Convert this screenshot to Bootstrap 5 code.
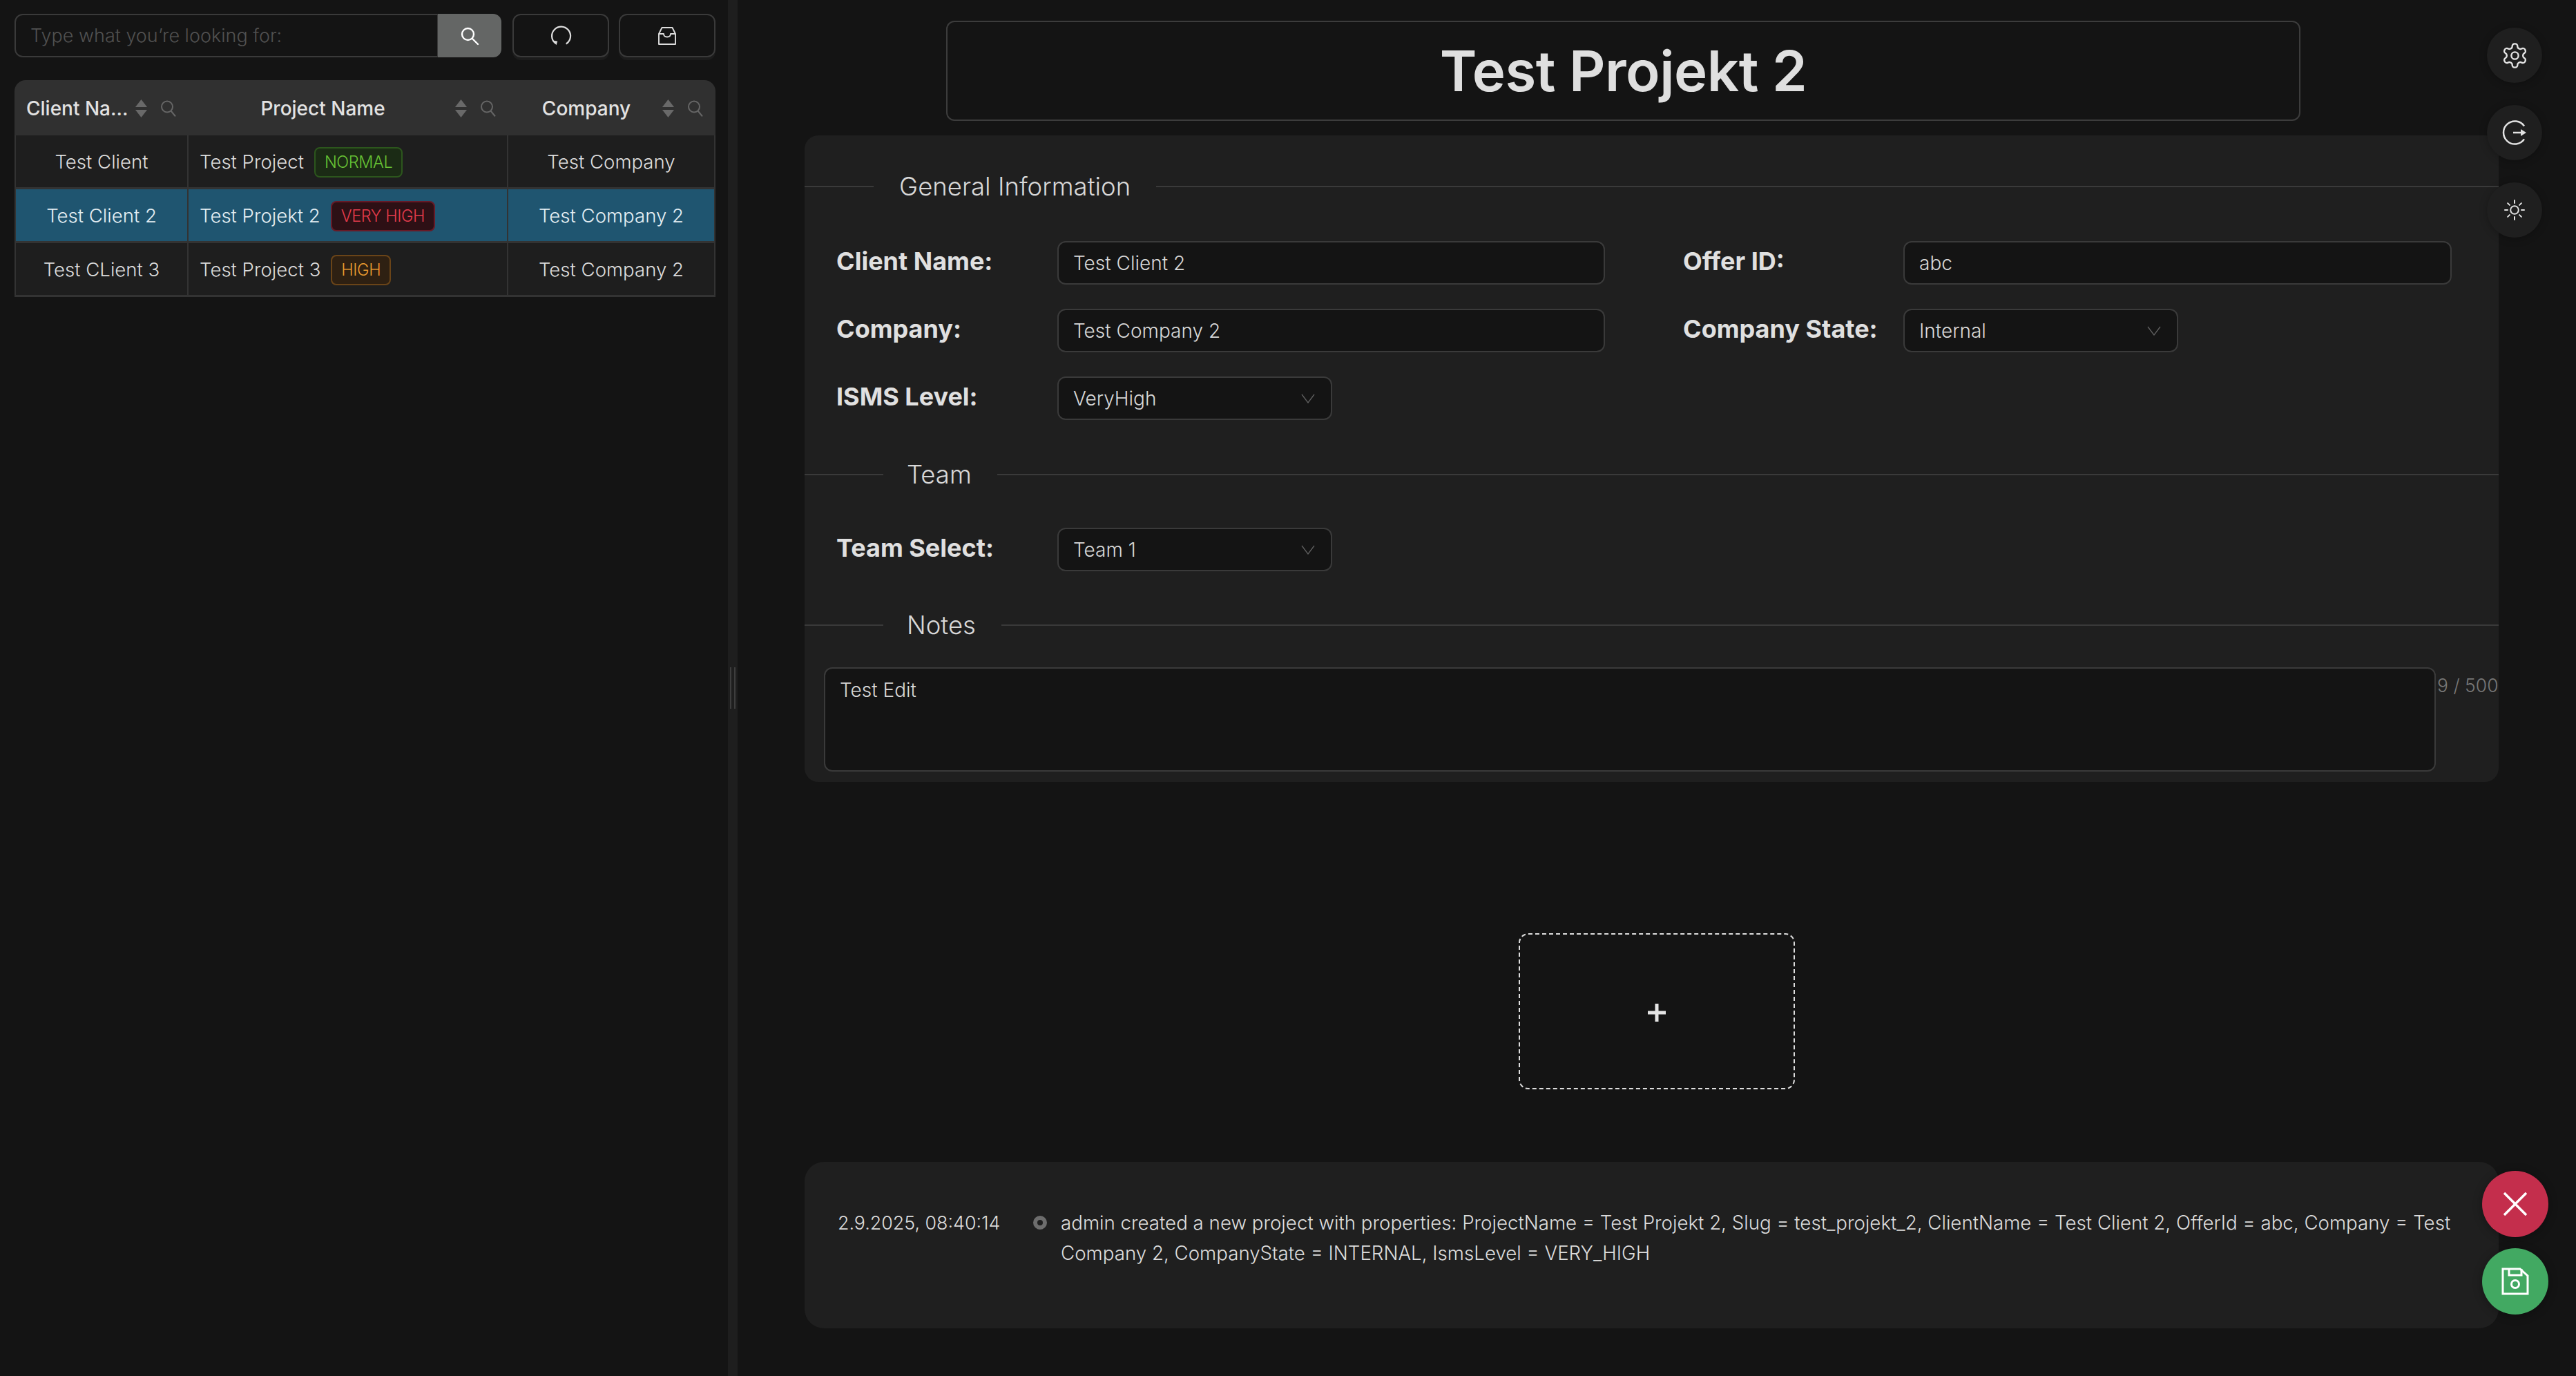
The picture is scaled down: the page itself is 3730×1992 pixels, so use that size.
<!DOCTYPE html>
<html lang="en">
<head>
  <meta charset="UTF-8" />
  <meta name="viewport" content="width=device-width, initial-scale=1" />
  <title>Test Projekt 2</title>
  <link href="https://cdn.jsdelivr.net/npm/bootstrap@5.3.0/dist/css/bootstrap.min.css" rel="stylesheet" />
  <style>
    html, body { height: 100%; }
    body {
      background-color: #141414;
      color: #dcdcdc;
      font-family: "Inter", "Liberation Sans", sans-serif;
      font-size: 27px;
      font-weight: 300;
      overflow: hidden;
    }
    svg { display: block; fill: none; stroke: currentColor; }

    /* left side */
    .side-pane { width: 1054px; padding: 20px 18px 0 21px; flex: none; }
    .top-tools { height: 63px; margin-bottom: 33px; }
    .search-group { width: 705px; margin-right: 16px; }
    .search-group .form-control {
      background: #141414; border: 2px solid #3a3a3a; color: #ddd; font-size: 27px; font-weight: 300;
      padding: 0 21px; border-radius: 12px 0 0 12px; height: 63px;
    }
    .search-group .form-control::placeholder { color: #505050; }
    .search-btn {
      width: 92px; height: 63px; background: #646665; border: 0; color: #fff;
      border-radius: 0 12px 12px 0 !important;
      display: flex; align-items: center; justify-content: center; padding: 0;
    }
    .tool-btn {
      width: 140px; height: 63px; background: #141414; border: 2px solid #3a3a3a; border-radius: 12px; color: #ddd;
      box-shadow: 0 4px 0 #1c1c1c; display: flex; align-items: center; justify-content: center; padding: 0;
    }
    .tool-btn + .tool-btn { margin-left: 14px; }
    .tool-btn:hover, .search-btn:hover { color: #fff; }

    .project-table {
      --bs-table-bg: #1e1e1e; --bs-table-color: #dcdcdc; --bs-table-border-color: #333;
      width: 1015px; table-layout: fixed; margin: 0; border-collapse: separate; border-spacing: 0;
      font-size: 27.600px;
    }
    .project-table .c-client { width: 252px; }
    .project-table .c-project { width: 463px; }
    .project-table .c-company { width: 300px; }
    .project-table th {
      background: #303030; color: #e2e2e2; height: 80px; padding: 1px 18px 0 17px; font-weight: 500; font-size: 28px; border: 0;
      box-shadow: none; vertical-align: middle;
    }
    .project-table th:first-child { border-top-left-radius: 16px; }
    .project-table th:last-child { border-top-right-radius: 16px; }
    .project-table td {
      height: 78px; padding: 2px 17px 0; vertical-align: middle; text-align: center;
      border: 0; border-right: 2px solid #333; border-bottom: 3px solid #333; white-space: nowrap;
    }
    .project-table td:first-child { border-left: 2px solid #333; }
    .project-table td.name-cell { text-align: left; padding-left: 16px; }
    .project-table tr.row-active td { --bs-table-bg: #1f5570; background: #1f5570; color: #e4eef3; }
    .head-text { flex: 1 1 0; min-width: 0; text-align: center; white-space: nowrap; }
    .sort-mark { width: 17px; height: 26px; margin: 0 20px 0 14px; flex: none; color: #696969; }
    .sort-mark path { fill: currentColor; stroke: none; }
    .filter-mark { width: 22px; height: 24px; flex: none; color: #666; stroke-width: 2; }
    .level-tag {
      display: inline-block; height: 44px; line-height: 40px; padding: 0 13px; margin-left: 15px; border-radius: 8px;
      font-size: 23.500px; font-weight: 300; border: 2px solid; letter-spacing: -.4px;
    }
    .level-normal { background: #1b2b15; border-color: #2c561d; color: #67c234; }
    .level-veryhigh { background: #2d1015; border-color: #671a27; color: #e23b4b; }
    .level-high { background: #2e2012; border-color: #6a4418; color: #e89a30; }

    .splitter { width: 14px; flex: none; background: #1e1e1e; display: flex; align-items: center; justify-content: center; gap: 4px; }
    .splitter i { display: block; width: 2px; height: 60px; background: #3d3d3d; }

    /* right side */
    .main-pane { flex: 1 1 0; min-width: 0; padding: 30px 112px 0 97px; position: relative; }
    .title-box {
      width: 1961px; height: 145px; margin: 0 0 21px 205px; border: 2px solid #3c3c3c; border-radius: 12px;
      display: flex; align-items: center; justify-content: center;
    }
    .title-box h1 { font-size: 81.500px; font-weight: 600; color: #dfdfdf; margin: 0; letter-spacing: -.5px; }
    .info-panel { background: #1f1f1f; border-radius: 20px; height: 936px; padding-top: 55px; }
    .line-title { display: flex; align-items: center; height: 38px; font-size: 36.500px; color: #d8d8d8; }
    .line-title::before, .line-title::after { content: ""; height: 2px; background: #3a3a3a; display: block; }
    .line-title::after { flex: 1 1 0; }
    .line-title span { margin: 0 37px; white-space: nowrap; }
    .line-general::before { width: 100px; }
    .line-team::before, .line-notes::before { width: 114px; }
    .line-team span, .line-notes span { margin-left: 34px; }
    .line-team { margin-top: 60px; }
    .field-grid {
      display: grid; grid-template-columns: 320px 793px 113px 319px 794px; row-gap: 35px;
      padding-left: 46px; align-items: center;
    }
    .fields-general { margin-top: 60px; }
    .field-grid label { font-size: 36px; font-weight: 700; color: #e0e0e0; margin: 0; white-space: nowrap; padding-bottom: 6px; }
    .field-grid .grid-gap { display: block; }
    .info-panel .form-control, .info-panel .form-select {
      background-color: #141414; border: 2px solid #3a3a3a; border-radius: 12px; color: #d8d8d8;
      font-size: 28px; font-weight: 300; height: 63px; padding: 0 21px;
    }
    .info-panel .form-select {
      width: 398px; padding-right: 50px;
      background-image: url("data:image/svg+xml,%3csvg xmlns='http://www.w3.org/2000/svg' viewBox='0 0 20 14'%3e%3cpath fill='none' stroke='%23606060' stroke-width='1.3' d='M1 1l9 12 9-12'/%3e%3c/svg%3e");
      background-position: right 23px center; background-size: 20px 14px;
    }
    .team-wrap { margin: 58px 0 59px; }
    .notes-wrap { display: flex; margin: 42px 0 0 28px; align-items: flex-start; }
    .info-panel textarea.form-control { width: 2334px; height: 151px; padding: 10px 21px; resize: none; flex: none; }
    .char-count { color: #777; font-size: 26.500px; margin: 7px 0 0 2px; white-space: nowrap; }

    .drop-zone {
      width: 400px; height: 226px; margin: 219px 0 105px 1034px; padding-top: 3px; border: 2px dashed #dedede; border-radius: 14px;
      display: flex; align-items: center; justify-content: center; color: #e4e4e4; background: transparent;
    }
    .log-panel { background: #1f1f1f; border-radius: 28px; height: 241px; padding: 66px 48px 0 48px; display: flex; line-height: 44px; font-size: 27.700px; }
    .log-date { width: 270px; flex: none; white-space: nowrap; font-size: 26.800px; }
    .log-dot { width: 20px; height: 20px; border: 6px solid #6d6d6d; border-radius: 50%; background: #1f1f1f; flex: none; margin: 12px 20px 0 13px; }

    .round-stack { position: absolute; display: flex; flex-direction: column; }
    .stack-top { left: 2533px; top: 40px; gap: 32px; }
    .stack-bottom { left: 2526px; top: 1695px; gap: 16px; }
    .round-btn {
      width: 80px; height: 80px; padding: 0; border: 0; border-radius: 50%; background: #1f1f1f; color: #e2e2e2;
      display: flex; align-items: center; justify-content: center; box-shadow: 0 2px 12px rgba(0,0,0,.25);
    }
    .round-big { width: 96px; height: 96px; color: #fff; box-shadow: 0 2px 14px rgba(0,0,0,.3); }
    .round-red { background: #c42e4c; }
    .round-green { background: #42a962; }
  </style>
</head>
<body>
  <div class="d-flex h-100">
    <div class="side-pane">
      <div class="d-flex top-tools">
        <div class="input-group search-group">
          <input type="text" class="form-control shadow-none" placeholder="Type what you’re looking for:" />
          <button class="btn search-btn" type="button">
            <svg width="28" height="28" viewBox="0 0 28 28"><g stroke-width="2.400" stroke-linecap="round"><circle cx="11.500" cy="11.500" r="8.500"/><path d="M18 18l8 8"/></g></svg>
          </button>
        </div>
        <button class="btn tool-btn" type="button">
          <svg width="32" height="32" viewBox="0 0 32 32"><g stroke-width="2.200" stroke-linecap="round"><path d="M24.500 27A13.500 13.500 0 1 0 8 26.500"/><path d="M4.500 22.500l5 6.800 1.800-5.600z" fill="currentColor" stroke="none"/></g></svg>
        </button>
        <button class="btn tool-btn" type="button">
          <svg width="28" height="28" viewBox="0 0 28 28"><g stroke-width="1.900" stroke-linejoin="round"><path d="M6.500 2h15l4.500 9v15H2V11z"/><path d="M2 11h7c0 3 2 4.500 5 4.500s5-1.500 5-4.500h7"/></g></svg>
        </button>
      </div>
      <table class="table project-table">
        <colgroup><col class="c-client" /><col class="c-project" /><col class="c-company" /></colgroup>
        <thead>
          <tr>
            <th><div class="d-flex align-items-center"><span class="head-text" title="Client Name">Client Na...</span>
              <svg class="sort-mark" viewBox="0 0 17 26"><path d="M8.500 0L17 11H0z"/><path d="M8.500 26L0 15h17z"/></svg>
              <svg class="filter-mark" viewBox="0 0 22 24"><circle cx="9" cy="9.500" r="8"/><path d="M14.500 15.500l6.500 8"/></svg></div></th>
            <th><div class="d-flex align-items-center"><span class="head-text">Project Name</span>
              <svg class="sort-mark" viewBox="0 0 17 26"><path d="M8.500 0L17 11H0z"/><path d="M8.500 26L0 15h17z"/></svg>
              <svg class="filter-mark" viewBox="0 0 22 24"><circle cx="9" cy="9.500" r="8"/><path d="M14.500 15.500l6.500 8"/></svg></div></th>
            <th><div class="d-flex align-items-center"><span class="head-text">Company</span>
              <svg class="sort-mark" viewBox="0 0 17 26"><path d="M8.500 0L17 11H0z"/><path d="M8.500 26L0 15h17z"/></svg>
              <svg class="filter-mark" viewBox="0 0 22 24"><circle cx="9" cy="9.500" r="8"/><path d="M14.500 15.500l6.500 8"/></svg></div></th>
          </tr>
        </thead>
        <tbody>
          <tr>
            <td>Test Client</td>
            <td class="name-cell"><div class="d-flex align-items-center">Test Project<span class="level-tag level-normal">NORMAL</span></div></td>
            <td>Test Company</td>
          </tr>
          <tr class="row-active">
            <td>Test Client 2</td>
            <td class="name-cell"><div class="d-flex align-items-center">Test Projekt 2<span class="level-tag level-veryhigh">VERY HIGH</span></div></td>
            <td>Test Company 2</td>
          </tr>
          <tr>
            <td>Test CLient 3</td>
            <td class="name-cell"><div class="d-flex align-items-center">Test Project 3<span class="level-tag level-high">HIGH</span></div></td>
            <td>Test Company 2</td>
          </tr>
        </tbody>
      </table>
    </div>

    <div class="splitter"><i></i><i></i></div>

    <div class="main-pane">
      <div class="title-box"><h1>Test Projekt 2</h1></div>

      <div class="info-panel">
        <div class="line-title line-general"><span>General Information</span></div>
        <div class="field-grid fields-general">
          <label for="clientName">Client Name:</label>
          <input id="clientName" class="form-control shadow-none" value="Test Client 2" />
          <span class="grid-gap"></span>
          <label for="offerId">Offer ID:</label>
          <input id="offerId" class="form-control shadow-none" value="abc" />

          <label for="company">Company:</label>
          <input id="company" class="form-control shadow-none" value="Test Company 2" />
          <span class="grid-gap"></span>
          <label for="companyState">Company State:</label>
          <select id="companyState" class="form-select shadow-none"><option>Internal</option></select>

          <label for="ismsLevel">ISMS Level:</label>
          <select id="ismsLevel" class="form-select shadow-none"><option>VeryHigh</option></select>
        </div>

        <div class="line-title line-team"><span>Team</span></div>
        <div class="field-grid team-wrap">
          <label for="teamSelect">Team Select:</label>
          <select id="teamSelect" class="form-select shadow-none"><option>Team 1</option></select>
        </div>

        <div class="line-title line-notes"><span>Notes</span></div>
        <div class="notes-wrap">
          <textarea class="form-control shadow-none">Test Edit</textarea>
          <span class="char-count">9 / 500</span>
        </div>
      </div>

      <div class="drop-zone">
        <svg width="26" height="26" viewBox="0 0 26 26"><path d="M13 0v26M0 13h26" stroke-width="5"/></svg>
      </div>

      <div class="log-panel">
        <div class="log-date">2.9.2025, 08:40:14</div>
        <div class="log-dot"></div>
        <div>admin created a new project with properties: ProjectName = Test Projekt 2, Slug = test_projekt_2, ClientName = Test Client 2, OfferId = abc, Company = Test Company 2, CompanyState = INTERNAL, IsmsLevel = VERY_HIGH</div>
      </div>

      <div class="round-stack stack-top">
        <button class="round-btn" type="button">
          <svg width="41" height="41" viewBox="0 0 24 24"><g stroke-width="1.400" stroke-linejoin="round"><path d="M12.220 2h-.440a2 2 0 0 0-2 2v.180a2 2 0 0 1-1 1.730l-.430.250a2 2 0 0 1-2 0l-.150-.080a2 2 0 0 0-2.730.730l-.220.380a2 2 0 0 0 .730 2.730l.150.100a2 2 0 0 1 1 1.720v.510a2 2 0 0 1-1 1.740l-.150.090a2 2 0 0 0-.730 2.730l.220.380a2 2 0 0 0 2.730.730l.150-.080a2 2 0 0 1 2 0l.430.250a2 2 0 0 1 1 1.730V20a2 2 0 0 0 2 2h.440a2 2 0 0 0 2-2v-.180a2 2 0 0 1 1-1.730l.430-.250a2 2 0 0 1 2 0l.150.080a2 2 0 0 0 2.730-.730l.220-.390a2 2 0 0 0-.730-2.730l-.150-.080a2 2 0 0 1-1-1.740v-.500a2 2 0 0 1 1-1.740l.150-.090a2 2 0 0 0 .730-2.730l-.220-.380a2 2 0 0 0-2.730-.730l-.150.080a2 2 0 0 1-2 0l-.430-.250a2 2 0 0 1-1-1.730V4a2 2 0 0 0-2-2z"/><circle cx="12" cy="12" r="3"/></g></svg>
        </button>
        <button class="round-btn" type="button">
          <svg width="36" height="36" viewBox="0 0 36 36"><g stroke-width="2.500"><path d="M32 8.500A16.500 16.500 0 1 0 32 27.500"/><path d="M16 18h15"/><path d="M27 13l8 5-8 5z" fill="currentColor" stroke="none"/></g></svg>
        </button>
        <button class="round-btn" type="button">
          <svg width="30" height="30" viewBox="0 0 30 30"><g stroke-width="2" stroke-linecap="round"><circle cx="15" cy="15" r="5.800"/><path d="M15 1v4M15 25v4M1 15h4M25 15h4M5.100 5.100l2.800 2.800M22.100 22.100l2.800 2.800M5.100 24.900l2.800-2.800M22.100 7.900l2.800-2.800"/></g></svg>
        </button>
      </div>

      <div class="round-stack stack-bottom">
        <button class="round-btn round-big round-red" type="button">
          <svg width="34" height="34" viewBox="0 0 34 34"><path d="M1 1l32 32M33 1L1 33" stroke-width="3.500"/></svg>
        </button>
        <button class="round-btn round-big round-green" type="button">
          <svg width="40" height="40" viewBox="0 0 40 40"><g stroke-width="3"><path d="M2 2h25l11 10v26H2z"/><path d="M11 2v9h18V2"/><circle cx="20" cy="24" r="5.500"/></g></svg>
        </button>
      </div>
    </div>
  </div>
</body>
</html>
